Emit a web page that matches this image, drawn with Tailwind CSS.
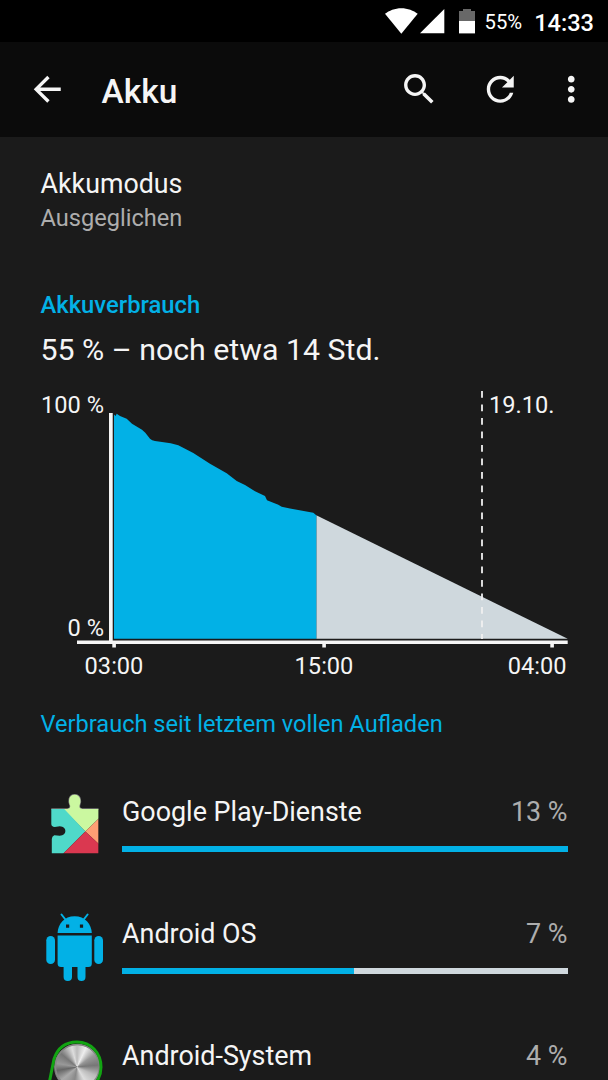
<!doctype html>
<html lang="de">
<head>
  <meta charset="UTF-8" />
  <meta name="viewport" content="width=device-width, initial-scale=1" />
  <script src="https://cdn.jsdelivr.net/npm/@tailwindcss/browser@4"></script>
  <title>Akku</title>
</head>
<body class="h-screen overflow-hidden bg-[#1b1b1b] font-['Roboto',sans-serif] text-[#f5f5f5]">
  <!-- Status bar -->
  <div class="flex h-[42px] items-center justify-end bg-black pr-[14px] text-white">
    <svg class="h-[42px] w-[96px] shrink-0" viewBox="382 0 96 42" fill="#fff">
      <path d="M401.300 33.800 385 13.800C389 10.500 395 8.200 401.300 8.200S413.600 10.500 417.700 13.800Z" />
      <path d="M444.300 9v24.300h-24.300Z" />
      <path d="M463 9h8v2h4v10h-16V11h4Z" fill="#686868" />
      <path d="M459 21h16v12.400h-16Z" />
    </svg>
    <span class="ml-[7px] mt-[2px] text-[20.250px] leading-[28px]">55%</span>
    <span class="ml-[12px] mt-[3px] text-[23.600px] font-medium leading-[28px]">14:33</span>
  </div>

  <!-- Toolbar -->
  <header class="flex h-[95px] items-center bg-[#0b0b0b] pl-[27px] pr-[17px]">
    <svg class="size-[40.500px] shrink-0" viewBox="0 0 24 24" fill="#f5f5f5"><path d="M20 11H7.830l5.590-5.590L12 4l-8 8 8 8 1.410-1.410L7.830 13H20v-2z" /></svg>
    <h1 class="ml-[34px] mt-[4px] flex-1 text-[33.500px] font-medium leading-[40px]">Akku</h1>
    <svg class="size-[40.500px] shrink-0" viewBox="0 0 24 24" fill="#f5f5f5"><path d="M15.500 14h-.79l-.28-.27C15.410 12.590 16 11.110 16 9.500 16 5.910 13.090 3 9.500 3S3 5.910 3 9.500 5.910 16 9.500 16c1.610 0 3.090-.59 4.230-1.570l.27.28v.79l5 4.990L20.490 19l-4.990-5zm-6 0C7.010 14 5 11.990 5 9.500S7.010 5 9.500 5 14 7.010 14 9.500 11.990 14 9.500 14z" /></svg>
    <svg class="ml-[40.500px] size-[40.500px] shrink-0" viewBox="0 0 24 24" fill="#f5f5f5"><path d="M17.650 6.350C16.200 4.900 14.210 4 12 4c-4.420 0-7.990 3.580-7.990 8s3.570 8 7.990 8c3.730 0 6.840-2.550 7.730-6h-2.080c-.82 2.330-3.040 4-5.650 4-3.310 0-6-2.690-6-6s2.690-6 6-6c1.660 0 3.140.69 4.220 1.780L13 11h7V4l-2.350 2.350z" /></svg>
    <svg class="ml-[30.500px] size-[40.500px] shrink-0" viewBox="0 0 24 24" fill="#f5f5f5"><path d="M12 8c1.100 0 2-.9 2-2s-.9-2-2-2-2 .9-2 2 .9 2 2 2zm0 2c-1.100 0-2 .9-2 2s.9 2 2 2 2-.9 2-2-.9-2-2-2zm0 6c-1.100 0-2 .9-2 2s.9 2 2 2 2-.9 2-2-.9-2-2-2z" /></svg>
  </header>

  <main>
    <section class="px-[40.500px] pt-[31px]">
      <h2 class="text-[26.800px] leading-[32px]">Akkumodus</h2>
      <p class="mt-[4px] text-[23.600px] leading-[28px] text-[#adadad]">Ausgeglichen</p>
    </section>

    <section class="pt-[59px]">
      <h3 class="px-[40.500px] text-[23.800px] font-medium leading-[28px] text-[#02b1e6]">Akkuverbrauch</h3>
      <p class="mt-[13px] px-[40.500px] text-[30.300px] leading-[36px]">55 % – noch etwa 14 Std.</p>

      <!-- Battery history -->
      <svg class="mt-[12px] block h-[310px] w-[608px]" viewBox="0 380 608 310" font-size="23.6" fill="#f5f5f5">
        <path fill="#cfd8dd" d="M316.300 515.300 567.700 638.800H316.300Z" />
        <path fill="#02b1e6" d="M114 638.800V414.500L115.600 416 116.700 413.700 120 416 126.700 418.700 132 423.700 142 429.700 145.300 432.700 150 438.700Q152 440.500 155 441L170.700 443.300 178.300 445.300 193.300 453 210 463.700 226.700 473.300 236.700 481 245 485 255 491.300 265 496 267 500.300 278.300 504.700 281.700 506.700 290 508.600 313.300 512.700 316.300 515.300V638.800Z" />
        <path d="M109 413h3.700v228H109ZM77 640.600h490.700v3.400H77Z" />
        <path d="M112.300 643h3.600v4.500h-3.600ZM322.300 643h3.600v4.500h-3.600ZM550.300 643h3.600v4.500h-3.600Z" />
        <path d="M482 391V639" stroke="#f0f0f0" stroke-width="1.800" stroke-dasharray="6.750 6.750" />
        <text x="104" y="413" text-anchor="end">100 %</text>
        <text x="104" y="636" text-anchor="end">0 %</text>
        <text x="489" y="413">19.10.</text>
        <text x="114" y="674" text-anchor="middle">03:00</text>
        <text x="324" y="674" text-anchor="middle">15:00</text>
        <text x="566.500" y="674" text-anchor="end">04:00</text>
      </svg>
    </section>

    <section class="px-[40.500px] pt-[20px]">
      <h3 class="text-[23.600px] leading-[28px] text-[#02b1e6]">Verbrauch seit letztem vollen Aufladen</h3>

      <ul class="mt-[52px] flex flex-col gap-[54px]">
        <li class="flex h-[68px]">
          <svg class="h-[68px] w-[68px] shrink-0" viewBox="41.200 790 68 68">
            <defs>
              <clipPath id="puzzle"><path d="M51.500 809H67.500Q71 808.500 70.300 805.500C68.500 802 68.500 795 74.800 794.800S81.500 802 79.700 805.500Q79 808.500 82.500 809H98.700V853.300H52V839Q52 836.300 54.500 835.300L60 835.800C67.500 835.500 67.500 826.500 60 826.300L55 827Q51.500 826.500 51.500 824Z" /></clipPath>
            </defs>
            <path d="M51.500 809H67.500Q71 808.500 70.300 805.500C68.500 802 68.500 795 74.800 794.800S81.500 802 79.700 805.500Q79 808.500 82.500 809H98.700" fill="none" stroke="#777" stroke-width="1.500" />
            <g clip-path="url(#puzzle)">
              <path fill="#cbf8a0" d="M50 794H100V817.500L85.500 831.500 63 809Z" />
              <path fill="#4fd9c9" d="M50 808.500H64L85.500 831.500 63 854H50Z" />
              <path fill="#ff9f73" d="M85.500 831.500 99 818.500V844Z" />
              <path fill="#da3850" d="M85.500 831.500 99 844V854H63Z" />
              <path fill="#1b1b1b" d="M50 828H57V834.500H50Z" />
            </g>
          </svg>
          <div class="ml-[13.500px] flex-1 pt-[5.500px]">
            <div class="flex justify-between text-[26.900px] leading-[32px]"><span>Google Play-Dienste</span><span class="text-[#adadad]">13 %</span></div>
            <div class="mt-[18.500px] h-[6px] bg-[#cfd8dd]"><div class="h-full bg-[#02b1e6]" style="width: 100%"></div></div>
          </div>
        </li>

        <li class="flex h-[68px]">
          <svg class="h-[70px] w-[68px] shrink-0" viewBox="40.700 912 68 70" fill="#02b1e6">
            <path d="M57.300 933C57.500 924 64 916.200 74.300 916.200S91.200 924 91.500 933Z" />
            <path d="M61.200 914.500 65.500 920M87.300 914.500 83 920" stroke="#02b1e6" stroke-width="2" stroke-linecap="round" />
            <path d="M57.300 935.500H91.500V963.500Q91.500 967 88 967H85.200V977Q85.200 981 81.200 981T77.200 977V967H71.700V977Q71.700 981 67.500 981T63.300 977V967H60.800Q57.300 967 57.300 963.500Z" />
            <rect x="46" y="936" width="8.700" height="28" rx="4.300" />
            <rect x="94" y="936" width="8.700" height="28" rx="4.300" />
            <path fill="#1b1b1b" d="M65.700 924.500h3.200v3.200h-3.200ZM79.600 924.500h3.200v3.200h-3.200Z" />
          </svg>
          <div class="ml-[13.500px] flex-1 pt-[5.500px]">
            <div class="flex justify-between text-[26.900px] leading-[32px]"><span>Android OS</span><span class="text-[#adadad]">7 %</span></div>
            <div class="mt-[18.500px] h-[6px] bg-[#cfd8dd]"><div class="h-full bg-[#02b1e6]" style="width: 52%"></div></div>
          </div>
        </li>

        <li class="flex h-[68px]">
          <div class="relative h-[68px] w-[68px] shrink-0">
            <div class="absolute left-[13.500px] top-[10px] size-[46px] rounded-full border border-[#777] bg-[conic-gradient(#bbb,#eee_25deg,#999_55deg,#777_85deg,#bbb_115deg,#ddd_150deg,#888_190deg,#aaa_230deg,#666_260deg,#999_280deg,#777_310deg,#ddd_345deg,#bbb)]"></div>
            <svg class="absolute inset-0 h-[68px] w-[68px]" viewBox="41 1034 68 68" fill="none">
              <circle cx="77.500" cy="1066.500" r="22" stroke="#888" stroke-width="1.500" />
              <path d="M49 1084 54 1059C58 1047 66 1042 77 1042 91 1042 101 1053 101 1067 101 1073 99 1079 95 1084" stroke="#12a412" stroke-width="3" />
            </svg>
          </div>
          <div class="ml-[13.500px] flex-1 pt-[5.500px]">
            <div class="flex justify-between text-[26.900px] leading-[32px]"><span>Android-System</span><span class="text-[#adadad]">4 %</span></div>
            <div class="mt-[18.500px] h-[6px] bg-[#cfd8dd]"><div class="h-full bg-[#02b1e6]" style="width: 30%"></div></div>
          </div>
        </li>
      </ul>
    </section>
  </main>
</body>
</html>
